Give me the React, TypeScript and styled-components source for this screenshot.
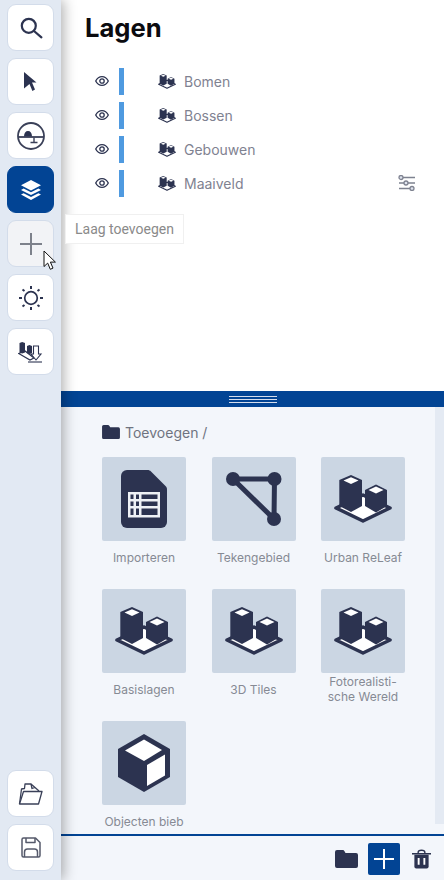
import { FC, ReactNode } from 'react';
import styled, { createGlobalStyle } from 'styled-components';

const DARK = '#2c3350';
const BLUE = '#024494';

const GlobalStyle = createGlobalStyle`
  html, body {
    margin: 0;
    padding: 0;
    background: #fff;
    font-family: 'Inter', 'Liberation Sans', sans-serif;
  }
`;

const Page = styled.div`
  position: relative;
  display: flex;
  width: 444px;
  height: 880px;
  overflow: hidden;
`;

const Sidebar = styled.aside`
  position: relative;
  z-index: 2;
  flex: 0 0 61px;
  display: flex;
  flex-direction: column;
  align-items: center;
  gap: 7px;
  padding: 4px 0 9px;
  box-sizing: border-box;
  background: #e2e9f3;
  box-shadow: 3px 0 12px rgba(0, 0, 0, 0.3);
`;

const ToolButton = styled.button<{ $active?: boolean; $hover?: boolean }>`
  display: flex;
  align-items: center;
  justify-content: center;
  flex: 0 0 47px;
  width: 47px;
  height: 47px;
  padding: 0;
  box-sizing: border-box;
  border-radius: 9px;
  border: 1px solid ${p => (p.$active ? BLUE : '#d3dcea')};
  background: ${p => (p.$active ? BLUE : p.$hover ? '#f2f3f6' : '#fff')};
`;

const SidebarSpacer = styled.div`
  flex: 1;
`;

const Main = styled.main`
  flex: 1;
  display: flex;
  flex-direction: column;
  min-width: 0;
`;

const LayerPanel = styled.section`
  flex: 0 0 391px;
  box-sizing: border-box;
  padding: 13px 28px 0 34px;
  background: #fff;
`;

const Title = styled.h1`
  margin: 0 0 26px -10px;
  font-size: 25.6px;
  line-height: 29px;
  font-weight: 700;
  color: #0b0b0f;
`;

const LayerList = styled.div`
  display: flex;
  flex-direction: column;
  gap: 7px;
`;

const LayerRow = styled.div`
  display: flex;
  align-items: center;
  height: 27px;
  box-sizing: border-box;
  padding-bottom: 1px;
`;

const ColorBar = styled.span`
  flex: 0 0 5px;
  align-self: flex-start;
  height: 27px;
  margin: 0 34px 0 10px;
  background: #4f9ae0;
`;

const LayerName = styled.span`
  flex: 1;
  margin-left: 8px;
  font-size: 14px;
  color: #7f8291;
`;

const Divider = styled.div`
  flex: 0 0 16px;
  display: flex;
  align-items: center;
  justify-content: center;
  background: ${BLUE};
`;

const Handle = styled.div`
  width: 48px;
  height: 7px;
  background: repeating-linear-gradient(to bottom, #d5ddec 0 1px, ${BLUE} 1px 3px);
`;

const Library = styled.section`
  flex: 1;
  display: flex;
  min-height: 0;
  background: #f3f6fb;
`;

const LibraryContent = styled.div`
  flex: 1;
  box-sizing: border-box;
  padding: 18px 0 0 41px;
  overflow: hidden;
`;

const ScrollTrack = styled.div`
  flex: 0 0 9px;
  margin-bottom: 10px;
  background: #e4eaf3;
`;

const Breadcrumb = styled.div`
  display: flex;
  align-items: center;
  gap: 5px;
  height: 14px;
  margin-bottom: 18px;
  font-size: 14px;
  color: #6f7380;
`;

const TileGrid = styled.div`
  display: grid;
  grid-template-columns: repeat(3, 84px);
  column-gap: 25.5px;
  row-gap: 16px;
`;

const TileItem = styled.div`
  display: flex;
  flex-direction: column;
`;

const TileImage = styled.div`
  display: flex;
  align-items: center;
  justify-content: center;
  width: 84px;
  height: 84px;
  border-radius: 2px;
  background: #cbd6e3;
`;

const TileLabel = styled.div`
  display: flex;
  align-items: center;
  justify-content: center;
  height: 32px;
  font-size: 12px;
  line-height: 15px;
  text-align: center;
  white-space: pre-line;
  color: #868a94;
`;

const Footer = styled.footer`
  flex: 0 0 46px;
  display: flex;
  align-items: center;
  justify-content: flex-end;
  gap: 10px;
  box-sizing: border-box;
  padding: 2px 13px 0 0;
  border-top: 2px solid ${BLUE};
  background: #f3f6fb;
`;

const AddButton = styled.button`
  display: flex;
  align-items: center;
  justify-content: center;
  width: 32px;
  height: 32px;
  margin-right: 2px;
  padding: 0;
  border: none;
  border-radius: 2px;
  background: ${BLUE};
`;

const Tooltip = styled.div`
  position: absolute;
  z-index: 3;
  left: 65px;
  top: 214px;
  width: 119px;
  height: 30px;
  display: flex;
  align-items: center;
  justify-content: center;
  box-sizing: border-box;
  border: 1px solid #f0f0f0;
  background: #fff;
  font-family: 'Roboto', 'Liberation Sans', sans-serif;
  font-size: 14px;
  color: #8a8a8a;
`;

const CursorMark = styled.svg`
  position: absolute;
  z-index: 4;
  left: 43px;
  top: 250px;
`;

const SearchIcon = () => (
  <svg width="24" height="24" viewBox="0 0 24 24" fill="none" stroke={DARK} strokeWidth="2.2" strokeLinecap="round">
    <circle cx="9.8" cy="9.8" r="7" />
    <path d="M15 15l7.4 6.4" />
  </svg>
);

const PointerIcon = () => (
  <svg width="13" height="20" viewBox="0 0 13 20">
    <path d="M0 0l12.500 10.500H8l3 7-2.600 1.500-2.900-7L0 16.500z" fill={DARK} />
  </svg>
);

const GaugeIcon = () => (
  <svg width="30" height="30" viewBox="0 0 30 30" fill="none" stroke="#3a4058" strokeWidth="1.800">
    <circle cx="15" cy="15" r="13" />
    <path d="M2 16h26" />
    <path d="M8 15.500c0-3.500 1.600-5.500 4-5.500s4 2 4 5.500z" fill={DARK} stroke="none" />
    <path d="M18 16.500v4.500M14.500 21.500h7" strokeWidth="1.400" />
  </svg>
);

const LayersIcon = () => (
  <svg width="22" height="22" viewBox="0 0 22 22" fill="#fff">
    <path d="M11 1l10 5.200-10 5.200L1 6.200z" />
    <path d="M3.600 9.500L11 13.300l7.400-3.800 2.600 1.400-10 5.200-10-5.200z" />
    <path d="M3.600 14.200L11 18l7.400-3.800 2.600 1.400-10 5.400-10-5.400z" />
  </svg>
);

const PlusIcon: FC<{ color: string; size: number; width?: number }> = ({ color, size, width = 2 }) => (
  <svg width={size} height={size} viewBox={`0 0 ${size} ${size}`} stroke={color} strokeWidth={width}>
    <path d={`M${size / 2} 0V${size}M0 ${size / 2}H${size}`} />
  </svg>
);

const SunIcon = () => (
  <svg width="26" height="26" viewBox="0 0 26 26" fill="none" stroke={DARK}>
    <circle cx="13" cy="13" r="6.300" strokeWidth="1.700" />
    <path
      d="M13 1v3M13 22v3M1 13h3M22 13h3M4.500 4.500l2 1.500M19.500 20l2 1.500M4.500 21.500l2-1.500M19.500 6l2-1.500"
      strokeWidth="2"
    />
  </svg>
);

const BuildingsIcon: FC<{ width: number; height: number }> = ({ width, height }) => (
  <svg width={width} height={height} viewBox="0 0 58 48">
    <path
      d="M29 20L56 33 29 46 2 33z"
      fill="#fff"
      stroke={DARK}
      strokeWidth="3.600"
      strokeLinejoin="round"
    />
    <path d="M17 0l11 5v26l-11 6-11.700-6V5z" fill={DARK} />
    <path d="M42 9.500l11 5.500v16l-11 6.500-11-6.500V15z" fill={DARK} />
    <path d="M17 2.200L24.500 5.500 17 9 9.500 5.500z" fill="#fff" />
    <path d="M42 11.500l7.500 3.500L42 18.500l-7.500-3.500z" fill="#fff" />
  </svg>
);

const LayerDownloadIcon = () => (
  <svg width="25" height="22" viewBox="0 0 25 22">
    <path d="M.7 12.500L7 10l9 7-4 2z" fill="#fff" stroke={DARK} strokeWidth="1.300" />
    <path d="M1.500 2l2.700-1 2.800 1v9.500l-2.800 1-2.700-1z" fill={DARK} />
    <path d="M9 5l2.500-1 2.500 1v7l-2.500 1L9 12z" fill={DARK} />
    <path d="M15.500 5h5v8h2.500l-5 6-5-6h2.500z" fill="#fff" stroke={DARK} strokeWidth="1.100" />
    <path d="M10 21h14" stroke={DARK} strokeWidth="1.100" />
  </svg>
);

const OpenFolderIcon = () => (
  <svg width="25" height="24" viewBox="0 0 25 24" fill="none" stroke="#3a4058" strokeWidth="1.300" strokeLinejoin="round">
    <path d="M1.500 22l2-15 3-.5L7 2h6l4 3.500 4 3.500" />
    <path d="M13 2l1 4.500 3-1" />
    <path d="M1.500 22h19L24 9.500H5.500z" fill="#fff" />
  </svg>
);

const SaveIcon = () => (
  <svg width="20" height="21" viewBox="0 0 20 21" fill="none" stroke="#555a6b" strokeWidth="1.500" strokeLinejoin="round">
    <path d="M1 2.500A1.500 1.500 0 0 1 2.500 1h12L19 5.500v13a1.500 1.500 0 0 1-1.500 1.500h-15A1.500 1.500 0 0 1 1 18.500z" />
    <path d="M5 1v4.500h9V1" />
    <path d="M3.500 20v-5a3 3 0 0 1 3-3h7a3 3 0 0 1 3 3v5" />
  </svg>
);

const EyeIcon = () => (
  <svg width="14" height="14" viewBox="0 0 14 14" fill="none" stroke={DARK} strokeWidth="1.300">
    <path d="M.7 7C2.200 4 4.300 2.600 7 2.600S11.800 4 13.300 7c-1.500 3-3.600 4.400-6.300 4.400S2.200 10 .7 7z" />
    <circle cx="7" cy="7" r="2.200" />
  </svg>
);

const SlidersIcon = () => (
  <svg width="18" height="16" viewBox="0 0 18 16" fill="#dfe4ee" stroke="#7e8290" strokeWidth="1.300">
    <path d="M5 2.500h12M1 8h5M10 8h7M1 13.500h11" />
    <circle cx="3" cy="2.500" r="2" />
    <circle cx="8" cy="8" r="2" />
    <circle cx="14" cy="13.500" r="2" />
  </svg>
);

const FolderIcon: FC<{ width: number; height: number }> = ({ width, height }) => (
  <svg width={width} height={height} viewBox="0 0 23 18">
    <path
      d="M0 2a2 2 0 0 1 2-2h5.500c1 0 1.500.5 2 1.200L10.500 3H21a2 2 0 0 1 2 2v11a2 2 0 0 1-2 2H2a2 2 0 0 1-2-2z"
      fill={DARK}
    />
  </svg>
);

const TrashIcon = () => (
  <svg width="19" height="20" viewBox="0 0 20 20">
    <path d="M0 4.500h20" stroke={DARK} strokeWidth="1.600" />
    <path d="M6.500 4V2.800C6.500 1.500 7.500.8 10 .8s3.500.7 3.500 2V4" fill="none" stroke={DARK} strokeWidth="1.500" />
    <path d="M2.500 5.500h15V18a2 2 0 0 1-2 2h-11a2 2 0 0 1-2-2z" fill={DARK} />
    <path d="M7 9v7M13 9v7" stroke="#fff" strokeWidth="2" />
  </svg>
);

const ImportIcon = () => (
  <svg width="46" height="58" viewBox="0 0 46 58">
    <path d="M6 0h20.500c1.500 0 2.500.5 3.500 1.500L44.500 16c1 1 1.500 2 1.500 3.500V52a6 6 0 0 1-6 6H6a6 6 0 0 1-6-6V6a6 6 0 0 1 6-6z" fill={DARK} />
    <rect x="7" y="22" width="32" height="25.500" fill="#eef1f5" />
    <path
      d="M9.500 24.500h3v4.500h-3zM15 24.500h3v4.500h-3zM20.500 24.500h16v4.500h-16zM9.500 31.500h3v4.500h-3zM15 31.500h3v4.500h-3zM20.500 31.500h16v4.500h-16zM9.500 38.500h3v6.500h-3zM15 38.500h3v6.500h-3zM20.500 38.500h16v6.500h-16z"
      fill={DARK}
    />
  </svg>
);

const DrawAreaIcon = () => (
  <svg width="56" height="54" viewBox="0 0 56 54">
    <path d="M7 7h41.500l-.5 40z" fill="none" stroke={DARK} strokeWidth="5" strokeLinejoin="round" />
    <circle cx="7" cy="7" r="7" fill={DARK} />
    <circle cx="48.500" cy="7" r="7" fill={DARK} />
    <circle cx="48" cy="47" r="7" fill={DARK} />
  </svg>
);

const CubeIcon = () => (
  <svg width="52" height="58" viewBox="0 0 52 58">
    <path d="M26 0l26 15v28L26 58 0 43V15z" fill={DARK} />
    <path d="M26 5.500L44 16 26 27 7 16.500z" fill="#fff" />
    <path d="M47 20.500v21L29 52V31z" fill="#fff" />
  </svg>
);

const CursorIcon = () => (
  <CursorMark width="14" height="21" viewBox="0 0 14 21">
    <path d="M1 1v15.500l3.700-3.400 2.600 6.200 2.700-1.200-2.600-6h5z" fill="#fff" stroke="#111" strokeWidth="1" strokeLinejoin="round" />
  </CursorMark>
);

const layers = ['Bomen', 'Bossen', 'Gebouwen', 'Maaiveld'];

const tiles: { label: string; icon: ReactNode }[] = [
  { label: 'Importeren', icon: <ImportIcon /> },
  { label: 'Tekengebied', icon: <DrawAreaIcon /> },
  { label: 'Urban ReLeaf', icon: <BuildingsIcon width={58} height={48} /> },
  { label: 'Basislagen', icon: <BuildingsIcon width={58} height={48} /> },
  { label: '3D Tiles', icon: <BuildingsIcon width={58} height={48} /> },
  { label: 'Fotorealisti-\nsche Wereld', icon: <BuildingsIcon width={58} height={48} /> },
  { label: 'Objecten bieb', icon: <CubeIcon /> },
];

export default function App() {
  return (
    <Page>
      <GlobalStyle />
      <Sidebar>
        <ToolButton><SearchIcon /></ToolButton>
        <ToolButton><PointerIcon /></ToolButton>
        <ToolButton><GaugeIcon /></ToolButton>
        <ToolButton $active><LayersIcon /></ToolButton>
        <ToolButton $hover><PlusIcon color="#7d818b" size={22} /></ToolButton>
        <ToolButton><SunIcon /></ToolButton>
        <ToolButton><LayerDownloadIcon /></ToolButton>
        <SidebarSpacer />
        <ToolButton><OpenFolderIcon /></ToolButton>
        <ToolButton><SaveIcon /></ToolButton>
      </Sidebar>

      <Main>
        <LayerPanel>
          <Title>Lagen</Title>
          <LayerList>
            {layers.map((name, i) => (
              <LayerRow key={name}>
                <EyeIcon />
                <ColorBar />
                <BuildingsIcon width={18} height={15} />
                <LayerName>{name}</LayerName>
                {i === layers.length - 1 && <SlidersIcon />}
              </LayerRow>
            ))}
          </LayerList>
        </LayerPanel>

        <Divider>
          <Handle />
        </Divider>

        <Library>
          <LibraryContent>
            <Breadcrumb>
              <FolderIcon width={18} height={14} />
              Toevoegen /
            </Breadcrumb>
            <TileGrid>
              {tiles.map(tile => (
                <TileItem key={tile.label}>
                  <TileImage>{tile.icon}</TileImage>
                  <TileLabel>{tile.label}</TileLabel>
                </TileItem>
              ))}
            </TileGrid>
          </LibraryContent>
          <ScrollTrack />
        </Library>

        <Footer>
          <FolderIcon width={23} height={18} />
          <AddButton><PlusIcon color="#fff" size={20} /></AddButton>
          <TrashIcon />
        </Footer>
      </Main>

      <Tooltip>Laag toevoegen</Tooltip>
      <CursorIcon />
    </Page>
  );
}
